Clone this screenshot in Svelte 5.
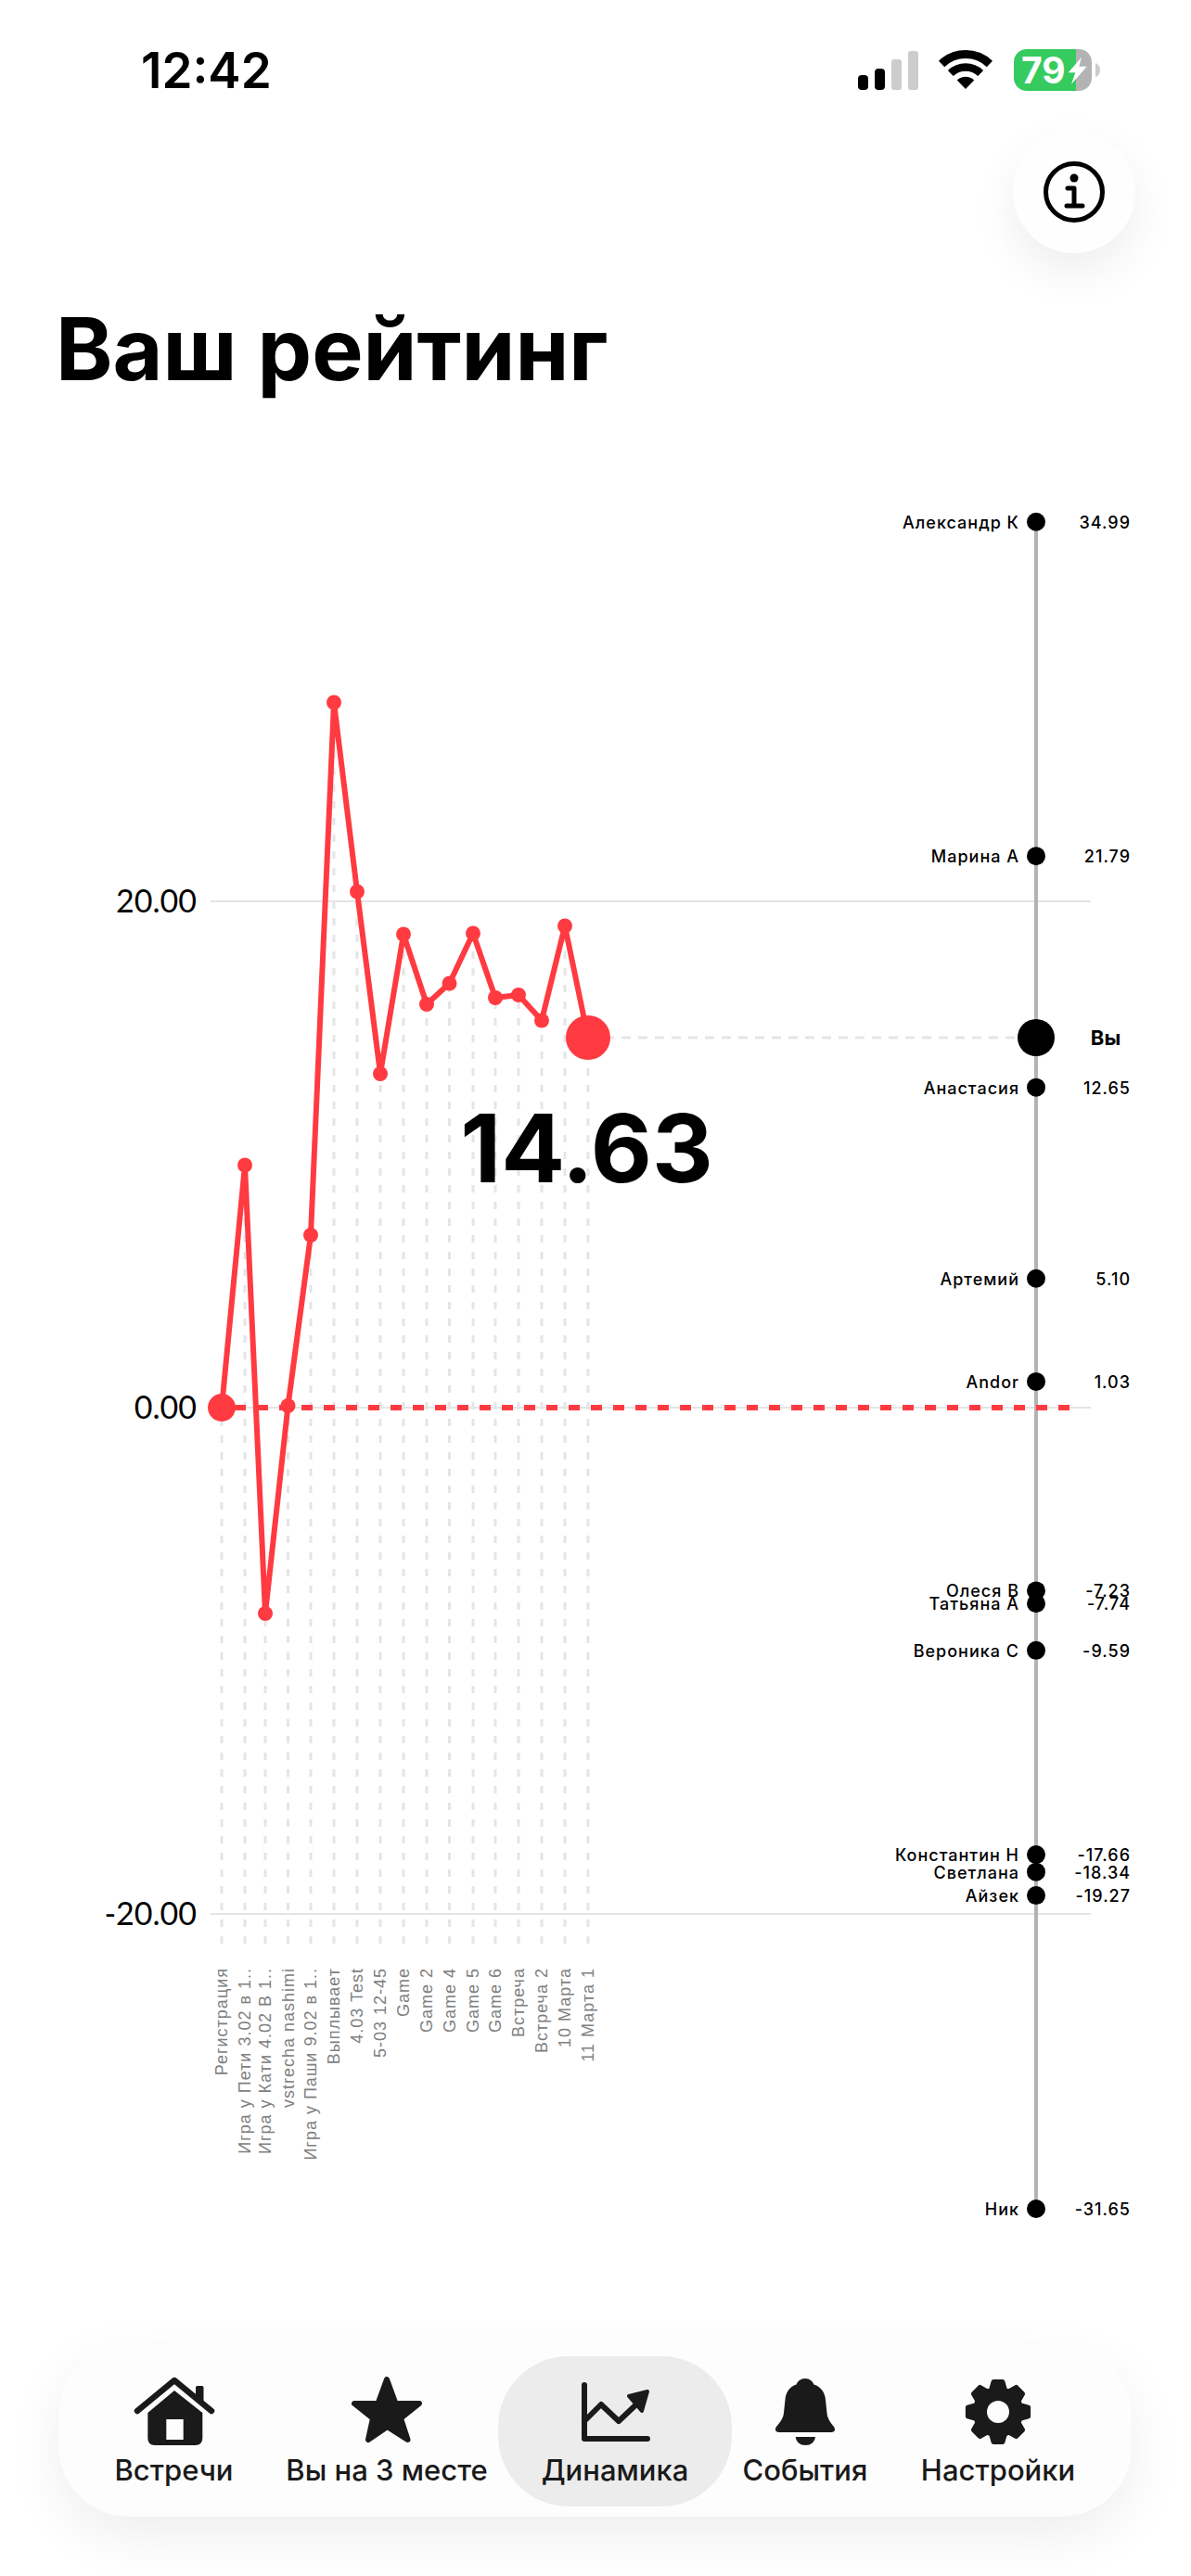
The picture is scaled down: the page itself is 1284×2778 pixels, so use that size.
<script>
	const RED = '#ff3a41';
	const zero = 1518;
	const perUnit = 27.3;

	const games = [
		{ label: 'Регистрация', x: 239, y: 1518 },
		{ label: 'Игра у Пети 3.02 в 1..', x: 264, y: 1256.5 },
		{ label: 'Игра у Кати 4.02 В 1..', x: 286, y: 1740 },
		{ label: 'vstrecha nashimi', x: 310.5, y: 1516 },
		{ label: 'Игра у Паши 9.02 в 1..', x: 335, y: 1332 },
		{ label: 'Выплывает', x: 360, y: 757.5 },
		{ label: '4.03 Test', x: 385, y: 961.5 },
		{ label: '5-03 12-45', x: 410, y: 1158 },
		{ label: 'Game', x: 435, y: 1007.5 },
		{ label: 'Game 2', x: 460, y: 1083 },
		{ label: 'Game 4', x: 484.5, y: 1060.5 },
		{ label: 'Game 5', x: 510, y: 1006.5 },
		{ label: 'Game 6', x: 534, y: 1076 },
		{ label: 'Встреча', x: 559, y: 1073 },
		{ label: 'Встреча 2', x: 584, y: 1100.5 },
		{ label: '10 Марта', x: 609, y: 998.5 },
		{ label: '11 Марта 1', x: 634, y: 1119 }
	];

	const players = [
		['Александр К', 34.99],
		['Марина А', 21.79],
		['Анастасия', 12.65],
		['Артемий', 5.1],
		['Andor', 1.03],
		['Олеся В', -7.23],
		['Татьяна А', -7.74],
		['Вероника С', -9.59],
		['Константин Н', -17.66],
		['Светлана', -18.34],
		['Айзек', -19.27],
		['Ник', -31.65]
	];

	const line = games.map((g) => `${g.x},${g.y}`).join(' ');
	const grid = [
		{ label: '20.00', y: 972 },
		{ label: '0.00', y: zero },
		{ label: '-20.00', y: 2064 }
	];

	// 8 teeth, tip and root points around the hole
	function gear(cx, cy, tip, root) {
		let d = '';
		for (let i = 0; i < 8; i++) {
			const a = (i * Math.PI) / 4 - Math.PI / 2;
			const pts = [
				[root, a - 0.3],
				[tip, a - 0.15],
				[tip, a + 0.15],
				[root, a + 0.3]
			];
			for (const [r, t] of pts) {
				d += `${d ? 'L' : 'M'}${(cx + r * Math.cos(t)).toFixed(1)} ${(cy + r * Math.sin(t)).toFixed(1)} `;
			}
		}
		return d + 'Z';
	}
	const gearPath = gear(45, 43, 33, 25);

	const tabs = ['Встречи', 'Вы на 3 месте', 'Динамика', 'События', 'Настройки'];
</script>

<div class="page">
	<div class="status">
		<span class="time">12:42</span>
		<div class="status-icons">
			<svg class="signal" width="66" height="42" viewBox="0 0 66 42">
				<rect x="1" y="26" width="11" height="16" rx="4" fill="#000" />
				<rect x="19" y="19" width="11" height="23" rx="4" fill="#000" />
				<rect x="37" y="9" width="11" height="33" rx="3" fill="#ccc" />
				<rect x="55" y="0" width="11" height="42" rx="3" fill="#ccc" />
			</svg>
			<svg class="wifi" width="58" height="42" viewBox="0 0 58 42">
				<path d="M3.1 14.9A37.5 37.5 0 0 1 54.9 14.9" fill="none" stroke="#000" stroke-width="9" />
				<path d="M12.8 25A23.5 23.5 0 0 1 45.2 25" fill="none" stroke="#000" stroke-width="8.5" />
				<path d="M29 42L19.8 32.4A13.3 13.3 0 0 1 38.2 32.4Z" fill="#000" />
			</svg>
			<svg class="battery" width="94" height="46" viewBox="0 0 94 46">
				<defs>
					<clipPath id="batt"><rect width="84" height="45" rx="14" /></clipPath>
				</defs>
				<g clip-path="url(#batt)">
					<rect width="67" height="45" fill="#36cb5e" />
					<rect x="67" width="17" height="45" fill="#b3b3b3" />
				</g>
				<path d="M88 15c3 1 5 4 5 7.500s-2 6.500-5 7.500Z" fill="#ccc" />
				<text class="batt-text" x="8" y="36.500">79</text>
				<path d="M73 8.700L58.700 25.300H66.300L62 37.700L78.700 18.700H70.300Z" fill="#fff" />
			</svg>
		</div>
	</div>

	<div class="info-row">
		<button class="info" aria-label="info">
			<svg width="66" height="66" viewBox="0 0 66 66">
				<circle cx="33" cy="33" r="30.500" fill="none" stroke="#000" stroke-width="5" />
				<circle cx="33" cy="18" r="4.500" fill="#000" />
				<path d="M26 29H33V47M25 48H42" fill="none" stroke="#000" stroke-width="5" stroke-linecap="round" stroke-linejoin="round" />
			</svg>
		</button>
	</div>

	<h1>Ваш рейтинг</h1>

	<svg class="chart" width="1284" height="2000" viewBox="0 500 1284 2000">
		{#each grid as g}
			<line class="grid-line" x1="227" x2="1176" y1={g.y} y2={g.y} />
			<text class="axis-label" x="212" y={g.y + 12}>{g.label}</text>
		{/each}

		{#each games as g}
			<line class="drop" x1={g.x} x2={g.x} y1="2096" y2={g.y} />
			<text class="game-label" x={g.x + 6} y="2122" transform="rotate(-90 {g.x + 6} 2122)">{g.label}</text>
		{/each}
		<line class="you-dash" x1="634" x2="1117" y1="1119" y2="1119" />

		<line class="axis" x1="1117" x2="1117" y1="563" y2="2382" />
		<line class="zero" x1="239" x2="1153" y1={zero} y2={zero} stroke={RED} />

		<polyline class="trend" points={line} stroke={RED} />
		{#each games as g, i}
			{#if i > 0 && i < games.length - 1}
				<circle cx={g.x} cy={g.y} r="8" fill={RED} />
			{/if}
		{/each}
		<circle cx="239" cy={zero} r="15" fill={RED} />
		<circle cx="634" cy="1119" r="24" fill={RED} />

		<text class="score" x="632.5" y="1275">14.63</text>

		{#each players as [name, value]}
			{@const y = zero - value * perUnit}
			<circle cx="1117" cy={y} r="10" fill="#000" />
			<text class="player" x="1099" y={y + 7}>{name}</text>
			<text class="player" x="1219" y={y + 7}>{value.toFixed(2)}</text>
		{/each}
		<circle cx="1117" cy="1119" r="20" fill="#000" />
		<text class="you" x="1192" y="1127">Вы</text>
	</svg>

	<nav class="tabs">
		{#each tabs as tab, i}
			<div class="tab" class:active={i === 2}>
				<svg width="90" height="80" viewBox="0 0 90 80" fill="#1a1a1a">
					{#if i === 0}
						<path d="M5 42L45 9L85 42" fill="none" stroke="#1a1a1a" stroke-width="6.500" stroke-linecap="round" stroke-linejoin="round" />
						<path d="M68 27V17C68 15.500 69 15 70 15H74.500C75.500 15 76.500 15.500 76.500 17V34Z" />
						<path fill-rule="evenodd" d="M45 20L16.300 44V71C16.300 76 19 79 24 79H67.500C72.500 79 75.300 76 75.300 71V44ZM36.300 51H54.700V73H36.300Z" />
					{:else if i === 1}
						<path d="M45 8L54.500 34H80L60 50L67.500 73L45.500 59L25 73L30 50L10 34H35.500Z" stroke="#1a1a1a" stroke-width="6" stroke-linejoin="round" />
					{:else if i === 2}
						<path d="M12 14V72H80M12 53L30 35L49 53L68 35" fill="none" stroke="#1a1a1a" stroke-width="6" stroke-linecap="round" stroke-linejoin="round" />
						<path d="M80 21L60 26L74 42Z" stroke="#1a1a1a" stroke-width="4" stroke-linejoin="round" />
					{:else if i === 3}
						<path d="M45 7C40 7 37 10 35.500 13.500C28 16 24 22 23.500 30L22 44C21.500 50 18 54 14 59C12 62 13 65 17 65H73C77 65 78 62 76 59C72 54 69 50 68.500 44L67 30C66.500 22 62 16 54.500 13.500C53 10 50 7 45 7Z" />
						<path d="M34.700 70H56A10.600 9 0 0 1 34.700 70Z" />
					{:else}
						<path d={gearPath} stroke="#1a1a1a" stroke-width="5" stroke-linejoin="round" />
						<circle cx="45" cy="43" r="12" fill="#fdfdfd" />
					{/if}
				</svg>
				<span>{tab}</span>
			</div>
		{/each}
	</nav>
</div>

<style>
	:global(body) {
		background: #fff;
	}

	.page {
		width: 1284px;
		height: 2778px;
		overflow: hidden;
		font-family: Inter, "Noto Sans", sans-serif;
		color: #000;
	}

	.status {
		height: 141px;
		box-sizing: border-box;
		padding: 53px 97px 0 152px;
		display: flex;
		justify-content: space-between;
		align-items: flex-start;
	}

	.time {
		font-size: 53px;
		font-weight: 600;
		line-height: 46px;
	}

	.status-icons {
		display: flex;
		align-items: flex-start;
	}

	.signal {
		margin: 2px 22px 0 0;
	}

	.wifi {
		margin: 1px 23px 0 0;
	}

	.batt-text {
		font-family: Inter, sans-serif;
		font-size: 39px;
		font-weight: 700;
		fill: #fff;
	}

	.info-row {
		display: flex;
		justify-content: flex-end;
		padding-right: 60px;
	}

	.info {
		width: 132px;
		height: 132px;
		padding: 0;
		border: 0;
		border-radius: 50%;
		background: #fefefe;
		box-shadow: 0 20px 50px rgba(0, 0, 0, 0.07);
		display: flex;
		align-items: center;
		justify-content: center;
	}

	h1 {
		margin: 0;
		height: 227px;
		padding: 47px 0 0 60px;
		box-sizing: border-box;
		font-size: 93px;
		font-weight: 700;
		line-height: 112px;
	}

	.chart {
		display: block;
	}

	.grid-line {
		stroke: #e4e4e4;
		stroke-width: 2;
	}

	.axis-label {
		font-family: Lato, sans-serif;
		font-size: 34px;
		text-anchor: end;
		fill: #000;
	}

	.drop {
		stroke: #e5e5e5;
		stroke-width: 3;
		stroke-dasharray: 8 10;
	}

	.you-dash {
		stroke: #e5e5e5;
		stroke-width: 3;
		stroke-dasharray: 10 8;
	}

	.game-label {
		font-family: "Liberation Sans", sans-serif;
		font-size: 18px;
		letter-spacing: 1px;
		fill: #808080;
		text-anchor: end;
	}

	.axis {
		stroke: #b3b3b3;
		stroke-width: 4;
	}

	.zero {
		stroke-width: 6;
		stroke-dasharray: 12 12;
		stroke-dashoffset: -14;
	}

	.trend {
		fill: none;
		stroke-width: 6;
		stroke-linejoin: round;
	}

	.score {
		font-size: 102px;
		font-weight: 700;
		text-anchor: middle;
		fill: #000;
	}

	.player {
		font-size: 18px;
		font-weight: 500;
		letter-spacing: 1px;
		text-anchor: end;
		fill: #000;
	}

	.you {
		font-size: 22px;
		font-weight: 700;
		text-anchor: middle;
		fill: #000;
	}

	.tabs {
		width: 1157px;
		height: 185px;
		margin: 29px 0 0 63px;
		box-sizing: border-box;
		padding: 12px 15px 11px;
		display: grid;
		grid-template-columns: 219px 240px 252px 158px 258px;
		background: #fdfdfd;
		border-radius: 76px;
		box-shadow: 0 20px 60px rgba(0, 0, 0, 0.07);
	}

	.tab {
		display: flex;
		flex-direction: column;
		align-items: center;
		padding-top: 17px;
		border-radius: 76px;
	}

	.tab.active {
		background: #ececec;
	}

	.tab span {
		margin-top: 6px;
		font-size: 31px;
		font-weight: 500;
		line-height: 40px;
		color: #1a1a1a;
		white-space: nowrap;
	}
</style>
